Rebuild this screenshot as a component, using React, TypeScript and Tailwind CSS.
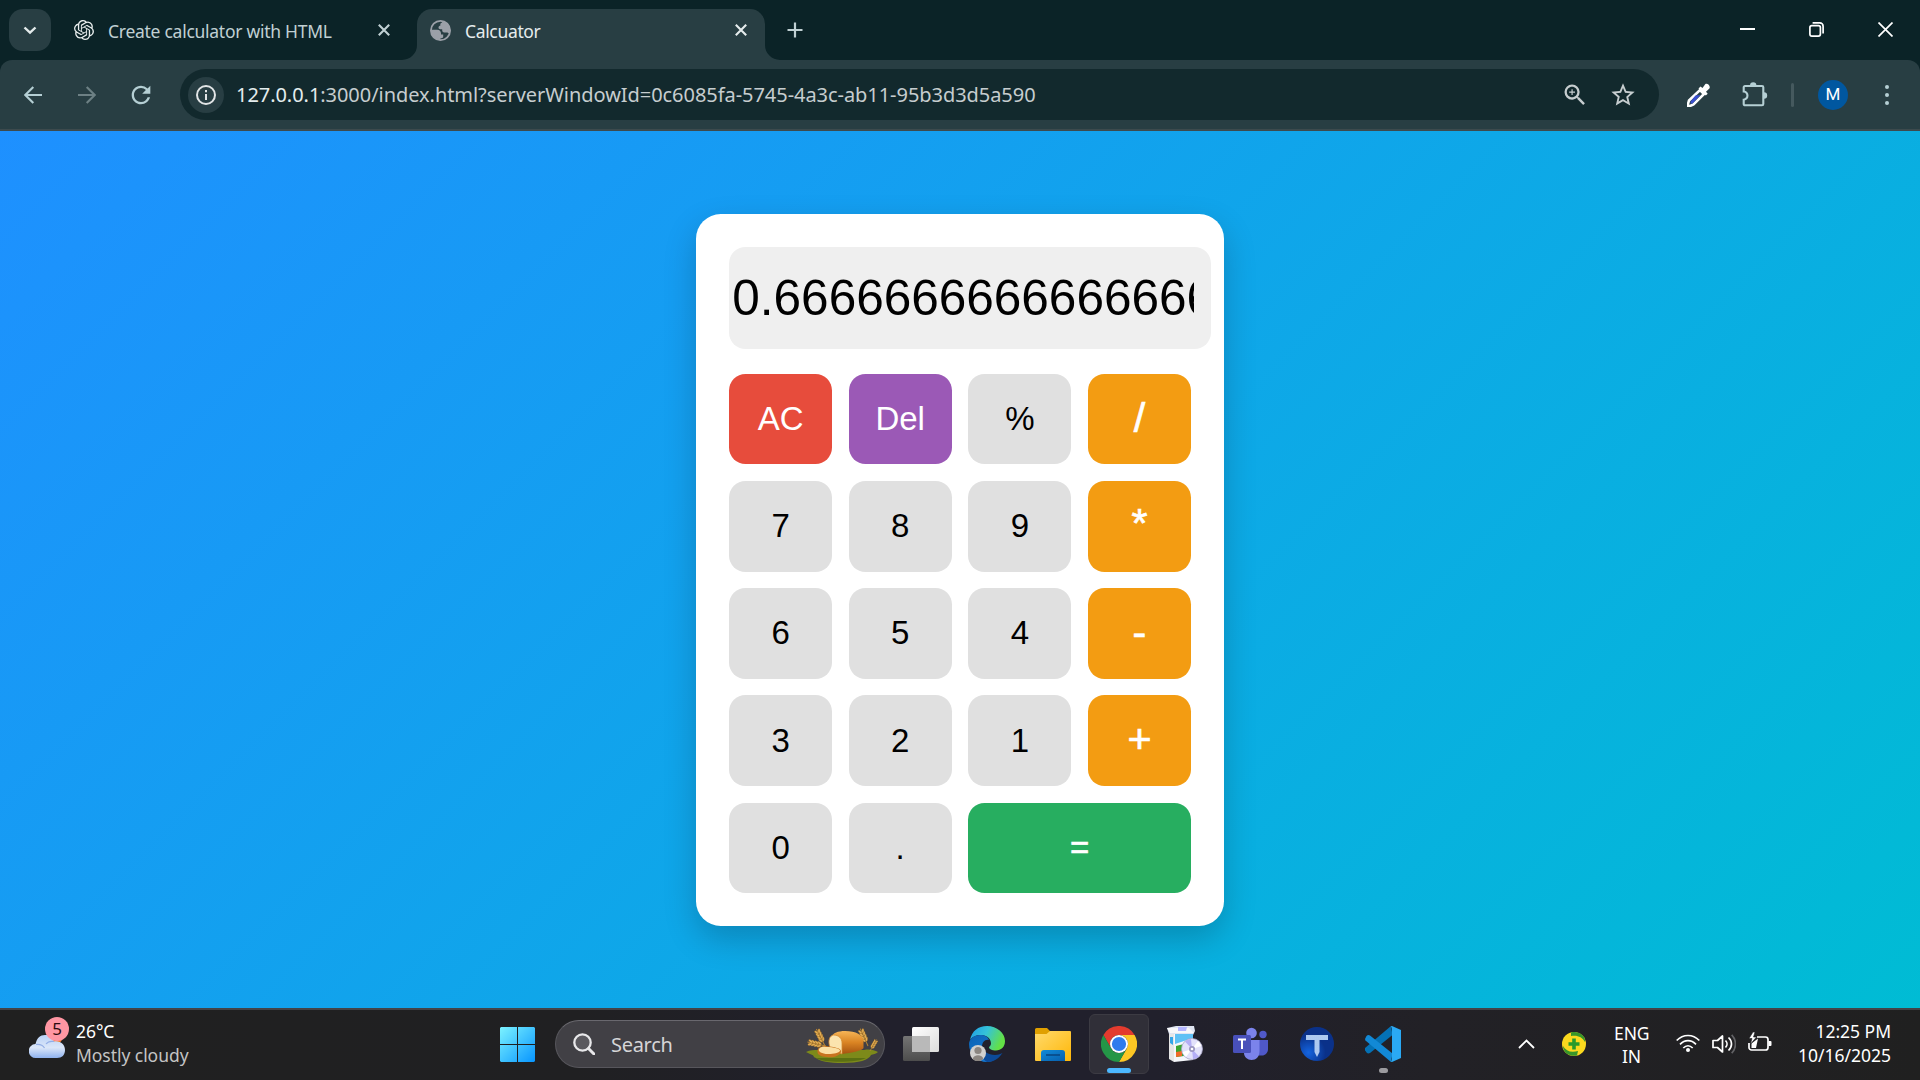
import type { ReactNode } from "react";
import { SiOpenai } from "react-icons/si";
import { MdOutlineZoomIn, MdStarBorder, MdRefresh } from "react-icons/md";

const ui = "font-['Noto_Sans','Open_Sans',sans-serif]";

function Close({ className }: { className: string }) {
  return (
    <svg className={className} width="12" height="12" viewBox="0 0 12 12" fill="none" stroke="currentColor" strokeWidth="2.1">
      <path d="M.8.8 11.2 11.2M11.2.8.8 11.2" />
    </svg>
  );
}

function Globe() {
  return (
    <svg className="mt-5 ml-[13px] h-[21px] w-[21px] shrink-0" viewBox="0 0 21 21">
      <circle cx="10.5" cy="10.5" r="9.6" fill="none" stroke="#9ba0a8" strokeWidth="1.8" />
      <path d="M11 .8C15.500.8 20.300 4.600 20.300 10.500c0 1.200-.2 2.200-.5 3.100-1-.1-1.800-.5-2.300-1.200h-3.300c-1.300 0-2-.8-2-1.900V9.200h-1.900c-1.100 0-1.800-.7-1.800-1.700 0-1.200.8-1.800 1.800-1.800V4.500c0-1.200.8-1.900 2-2.100Z" fill="#9ba0a8" />
      <path d="M1 9.800h6.200c2.300 0 3.800 1.500 3.800 3.600v1h2.200v2.200c0 1-.7 1.700-1.700 1.700h-1v2C5 20.200 1 15.500 1 9.800Z" fill="#9ba0a8" />
    </svg>
  );
}

function TabStrip() {
  return (
    <div className="flex h-[60px] bg-[#0b2327] text-[#c0d0d3]">
      <button className="mt-[9px] ml-[9px] flex h-[42px] w-[42px] items-center justify-center rounded-[14px] bg-[#283e43] text-[#e3eaeb]">
        <svg width="14" height="9" viewBox="0 0 14 9" fill="none" stroke="currentColor" strokeWidth="2.4"><path d="m1.500 1.500 5.500 5.200 5.500-5.200" /></svg>
      </button>
      <div className="flex w-[366px]">
        <SiOpenai className="mt-5 ml-[23px] shrink-0 text-[#e9eeee]" size={20} />
        <span className="mt-[18px] ml-[14px] w-[270px] text-[17.500px] leading-[26px] tracking-[-0.270px] whitespace-nowrap">Create calculator with HTML</span>
        <Close className="mt-6 shrink-0" />
      </div>
      <div className="relative mt-[9px] flex h-[51px] w-[348px] rounded-t-[15px] bg-[#283e43] text-[#e6eced]">
        <svg className="absolute bottom-0 -left-[15px]" width="15" height="15"><path d="M15 0v15H0A15 15 0 0 0 15 0Z" fill="#283e43" /></svg>
        <svg className="absolute -right-[15px] bottom-0" width="15" height="15"><path d="M0 0v15h15A15 15 0 0 1 0 0Z" fill="#283e43" /></svg>
        <div className="-mt-[9px] flex">
          <Globe />
          <span className="mt-[18px] ml-[14px] w-[270px] text-[17.500px] leading-[26px] tracking-[-0.340px]">Calcuator</span>
          <Close className="mt-6 shrink-0" />
        </div>
      </div>
      <svg className="mt-[22px] ml-[22px]" width="16" height="16" viewBox="0 0 16 16" stroke="currentColor" strokeWidth="2.200"><path d="M8 .5v15M.5 8h15" /></svg>
      <div className="mt-[22px] mr-[27px] ml-auto flex gap-[54px] text-white">
        <svg width="15" height="15" stroke="currentColor" strokeWidth="2"><path d="M0 7h15" /></svg>
        <svg width="15" height="15" fill="none" stroke="currentColor" strokeWidth="1.700"><rect x=".9" y="3.600" width="10.500" height="10.500" rx="2" /><path d="M3.600.9h7.200a3.300 3.300 0 0 1 3.300 3.300v7.300" /></svg>
        <svg width="15" height="15" stroke="currentColor" strokeWidth="1.700"><path d="m.5.500 14 14M14.500.5l-14 14" /></svg>
      </div>
    </div>
  );
}

function Toolbar() {
  return (
    <div className="bg-[#0b2327]">
      <div className="flex h-[71px] items-center rounded-t-[12px] border-b-2 border-[#3d4a4d] bg-[#283e43] text-[#b5cfd4]">
        <svg className="ml-6" width="18" height="18" fill="none" stroke="currentColor" strokeWidth="2.100"><path d="M18 9H1.500M9.300 1 1.300 9l8 8" /></svg>
        <svg className="ml-9 text-[#6d8084]" width="18" height="18" fill="none" stroke="currentColor" strokeWidth="2.100"><path d="M0 9h16.500M8.700 1l8 8-8 8" /></svg>
        <MdRefresh className="ml-[31px] shrink-0" size={28} />
        <div className="ml-[25px] flex h-[51px] w-[1479px] items-center rounded-full bg-[#12292d] text-[#c6cdcf]">
          <span className="ml-2 flex h-9 w-9 items-center justify-center rounded-full bg-[#283e43] text-[#e2e5e6]">
            <svg width="20" height="20" fill="none" stroke="currentColor" strokeWidth="2"><circle cx="10" cy="10" r="9" /><path d="M10 9v6M10 5v2.200" /></svg>
          </span>
          <span className="ml-3 w-[1311px] text-[20px] leading-[28px] tracking-[-0.050px] whitespace-nowrap">
            <span className="text-[#e4edee]">127.0.0.1</span>:3000/index.html?serverWindowId=0c6085fa-5745-4a3c-ab11-95b3d3d5a590
          </span>
          <MdOutlineZoomIn className="ml-[14px] shrink-0" size={28} />
          <MdStarBorder className="ml-5 shrink-0" size={28} />
        </div>
        <svg className="ml-[28px]" width="24" height="24" viewBox="0 0 24 24">
          <path d="m13 7 4 4L6.500 21.500 3 23H1v-2l1-3.500Z" fill="#283e43" stroke="#fff" strokeWidth="2.600" />
          <path d="m8.500 12.500 5-.5-8 8.500H3.600v-2Z" fill="#3a4fd0" />
          <path d="m11.500 5.500 2-2 2 1.500 2.700-3.700c2-1.800 5.800 2 4.200 4.200L19 8.700l1.700 2-1.900 1.900Z" fill="#fff" />
        </svg>
        <svg className="ml-[31px]" width="26" height="25" viewBox="0 0 26 25">
          <path d="M3 4h17a1.300 1.300 0 0 1 1.300 1.300V22a1.300 1.300 0 0 1-1.300 1.300H3A1.300 1.300 0 0 1 1.700 22v-4.300c5-.8 5-7.400 0-8.200V5.300A1.300 1.300 0 0 1 3 4Z" fill="none" stroke="currentColor" strokeWidth="2.100" />
          <path d="M8 3.500a3.200 3.200 0 0 1 6.400 0ZM22 10.300a3.200 3.200 0 0 1 0 6.400Z" fill="currentColor" />
        </svg>
        <div className="ml-[23px] h-6 w-[3px] rounded bg-[#45595e]" />
        <div className="ml-6 flex h-[30px] w-[30px] items-center justify-center rounded-full bg-[#0057a0] font-[Roboto,sans-serif] text-[17px] font-normal text-white">M</div>
        <div className="ml-[37px] flex flex-col gap-1">
          <i className="h-1 w-1 rounded-full bg-current" />
          <i className="h-1 w-1 rounded-full bg-current" />
          <i className="h-1 w-1 rounded-full bg-current" />
        </div>
      </div>
    </div>
  );
}

const grey = "pb-px bg-[#e0e0e0] text-[33px] text-black";
const orange = "bg-[#f39c12] text-[41.250px] text-white [-webkit-text-stroke:0.7px_white]";
const keys: [string, string][] = [
  ["AC", "pb-px bg-[#e74c3c] text-[33px] text-white"], ["Del", "pb-px bg-[#9b59b6] text-[33px] text-white"], ["%", grey], ["/", `${orange} pb-px`],
  ["7", grey], ["8", grey], ["9", grey], ["*", `${orange} pb-[5px]`],
  ["6", grey], ["5", grey], ["4", grey], ["-", `${orange} pb-px`],
  ["3", grey], ["2", grey], ["1", grey], ["+", `${orange} pb-[2px]`],
  ["0", grey], [".", grey], ["=", "col-span-2 pb-px bg-[#27ae60] text-[33px] text-white [-webkit-text-stroke:0.6px_white]"],
];

function Calculator() {
  return (
    <main className="flex h-[877px] justify-center bg-[linear-gradient(135deg,#1e90ff,#00bcd4)] font-['Liberation_Sans',Arial,sans-serif]">
      <div className="mt-[83px] h-[712px] w-[528px] rounded-[24.750px] bg-white p-[33px] shadow-[0_13px_33px_rgba(0,0,0,0.2)]">
        <div className="h-[102px] w-[482px] rounded-[16.500px] bg-[#efefef] pr-[17px] pl-[3.300px]">
          <div className="overflow-hidden text-[49.500px] leading-[102px] whitespace-nowrap text-black">0.6666666666666666</div>
        </div>
        <div className="mt-[24.600px] grid grid-cols-4 gap-[16.500px]">
          {keys.map(([label, tone]) => (
            <button key={label} className={`h-[90.750px] rounded-[16.500px] leading-none ${tone}`}>{label}</button>
          ))}
        </div>
      </div>
    </main>
  );
}

function Weather() {
  return (
    <div className="ml-[29px] flex w-[471px]">
      <div className="relative mt-[26px] h-[26px] w-9">
        <svg width="36" height="26" viewBox="0 0 36 26">
          <defs><linearGradient id="cl" x2="0" y2="1"><stop stopColor="#b9d2f7" /><stop offset=".55" stopColor="#dbe6f8" /><stop offset="1" stopColor="#8fb2ee" /></linearGradient></defs>
          <circle cx="26" cy="2" r="8" fill="#f47b20" />
          <path d="M7 24a7 7 0 0 1-.5-14C8 4 11 1 16 1c4.500 0 7.500 2.500 9 6.500C31.500 6.500 36 10.500 36 16c0 5-3 8-8 8Z" fill="url(#cl)" />
          <path d="M7 10.500c4-.5 7 1 8.500 3.500M17 10c2-2.500 5-3 8-2.500" stroke="#93aee6" strokeWidth="1.200" fill="none" />
        </svg>
        <span className="absolute -top-[17px] left-4 h-6 w-6 rounded-full bg-[#ff96a3] text-center text-[17px] leading-6 text-[#2b0c10]">5</span>
      </div>
      <div className="mt-[11px] ml-[11px] text-[17.500px] leading-6 tracking-[-0.050px] text-[#c4c4c4]">
        <div className="text-white">26°C</div>
        <div>Mostly cloudy</div>
      </div>
    </div>
  );
}

function Wheat({ transform }: { transform: string }) {
  return (
    <g transform={transform}>
      <path d="M0 0V-19" stroke="#b98532" strokeWidth="1" />
      {[-7, -10, -13, -16].map((y) => (
        <g key={y} fill="#e5b055" stroke="#93601d" strokeWidth=".35">
          <ellipse cx="-1.500" cy={y} rx="1.100" ry="2.300" transform={`rotate(-25 -1.500 ${y})`} />
          <ellipse cx="1.500" cy={y} rx="1.100" ry="2.300" transform={`rotate(25 1.500 ${y})`} />
        </g>
      ))}
    </g>
  );
}

function Bread() {
  return (
    <svg className="mt-px ml-[134px]" width="72" height="36" viewBox="0 0 72 36">
      <defs>
        <linearGradient id="crust" x2="0" y2="1"><stop stopColor="#f6b556" /><stop offset=".5" stopColor="#da8423" /><stop offset="1" stopColor="#a65310" /></linearGradient>
      </defs>
      <path d="M0 25c4-2 8-2 12-2h46c6-1 10 0 14 2-2 2-5 2-7 3-2 5-12 8-28 8-14 0-24-2-27-5C6 30 10 29 4 27Z" fill="#7d8a1a" />
      <path d="M10 31h50c-6 4-40 6-50 0Z" fill="#5b7012" />
      <Wheat transform="translate(19 19) rotate(-27)" />
      <Wheat transform="translate(20 19) rotate(-78)" />
      <Wheat transform="translate(62 19) rotate(-24)" />
      <Wheat transform="translate(64 24) rotate(30) scale(.7)" />
      <path d="M25 10c2-4 7-6 14-6 11 0 18 4 18.500 10v7c0 2-12 5-22 6Z" fill="url(#crust)" />
      <path d="M23.500 19c-1.500-6 0-10 4-11 5 0 8.500 3 8.500 8v11l-11-4Z" fill="#fbe4ae" stroke="#d68a2e" strokeWidth=".8" />
      <path d="M12 27c-2-6 2-8 8-8 8 1 16 2 15 6-1 4-8 6-14 5-4 0-7-1-9-3Z" fill="#c8741f" />
      <path d="M13 24c-1-3 3-5 7-4 8 0 15 2 14 4-2 3-17 5-21 0Z" fill="#fbe0a3" />
    </svg>
  );
}

function App36({ children, className = "" }: { children: ReactNode; className?: string }) {
  return (
    <svg className={`mt-[18px] shrink-0 ${className}`} width="36" height="36" viewBox="0 0 36 36">
      {children}
    </svg>
  );
}

function Apps() {
  return (
    <div className="flex">
      <svg className="mt-[19px]" width="35" height="35" viewBox="0 0 35 35">
        <defs><linearGradient id="win" gradientUnits="userSpaceOnUse" x2="35" y2="35"><stop stopColor="#7cf3ff" /><stop offset="1" stopColor="#0795ff" /></linearGradient></defs>
        <path d="M1 0h16v17H0V1ZM18 0h16l1 1v16H18ZM0 18h17v17H1l-1-1ZM18 18h17v16l-1 1H18Z" fill="url(#win)" />
      </svg>
      <div className="mt-3 ml-5 flex h-12 w-[330px] items-center rounded-full border border-[#57565c] border-t-[#69686e] bg-[#414045] text-[#d5d5d7]">
        <svg className="ml-[17px]" width="22" height="22" fill="none" stroke="#e8e8ea" strokeWidth="2.300"><circle cx="9.500" cy="9.500" r="8.200" fill="#5a595e" /><path d="m15.500 15.500 5.500 5.500" strokeWidth="3" strokeLinecap="round" /></svg>
        <span className="mt-[2px] ml-4 w-[61px] text-[20px] tracking-[-0.300px]">Search</span>
        <Bread />
      </div>
      <App36 className="ml-[18px]">
        <defs>
          <linearGradient id="tv" x2="1" y2="1"><stop stopColor="#fff" /><stop offset="1" stopColor="#dcdcdc" /></linearGradient>
          <linearGradient id="tv2" x2="0" y2="1"><stop stopColor="#747474" /><stop offset="1" stopColor="#4d4d4d" /></linearGradient>
        </defs>
        <rect y="10" width="27" height="25" rx="1.500" fill="url(#tv2)" />
        <rect x="9" y="1" width="27" height="25" rx="1.500" fill="url(#tv)" />
        <path d="M9 10h18v16H9Z" fill="#b9b9b9" />
      </App36>
      <App36 className="ml-[30px]">
        <defs>
          <linearGradient id="ed" x2="1" y2=".35"><stop stopColor="#1d9be8" /><stop offset=".5" stopColor="#35c3d8" /><stop offset="1" stopColor="#63e046" /></linearGradient>
          <linearGradient id="ed2" x2=".7" y2="1"><stop stopColor="#0c62b3" /><stop offset="1" stopColor="#1479d4" /></linearGradient>
        </defs>
        <path d="M1 14C3 5 9 0 18 0c10 0 18 7 18 15 0 6-4 9.500-9 9.500-4 0-7-1.500-7-3 0-1 2-1.500 2-4C22 13 18 9 12 9 7 9 3 11 1 14Z" fill="url(#ed)" />
        <path d="M0 18c0-5 5-9 11-9 5 0 8 2 9 5-4-1-7 2-7 7 0 7 6 12 13 12-2 2-5 3-8 3C8 36 0 28 0 18Z" fill="url(#ed2)" />
        <path d="M13 20c1 5 6 9 13 9 3 0 5-1 7.500-2-4 6-9 9-15.500 9-4-2-7-9-5-16Z" fill="#0c4a99" />
        <circle cx="9" cy="27" r="8" fill="#d2d0ce" />
        <circle cx="9" cy="24.500" r="3.600" fill="#8b8580" />
        <path d="M3.800 33c.5-5 10-5 10.400 0-3 2.700-7.400 2.700-10.400 0Z" fill="#8b8580" />
      </App36>
      <App36 className="ml-[30px]">
        <defs>
          <linearGradient id="fo" x2="1" y2="1"><stop stopColor="#ffda6c" /><stop offset="1" stopColor="#ffb708" /></linearGradient>
          <linearGradient id="fb" x2="1" y2="1"><stop stopColor="#118bd8" /><stop offset="1" stopColor="#075fae" /></linearGradient>
        </defs>
        <path d="M0 3.500A1.500 1.500 0 0 1 1.500 2H12l3 3v4H0Z" fill="#e0a000" />
        <path d="M0 8h11.500L15 5h20a1 1 0 0 1 1 1v28a1 1 0 0 1-1 1H1a1 1 0 0 1-1-1Z" fill="url(#fo)" />
        <path d="M6 35v-8a3 3 0 0 1 3-3h18a3 3 0 0 1 3 3v8Z" fill="url(#fb)" />
        <path d="M11 29h14" stroke="#08447f" strokeWidth="1.500" />
      </App36>
      <div className="mt-[6px] ml-[18px] flex h-[60px] w-[60px] flex-col items-center rounded-[6px] border border-[#3c3b43] bg-[#302f38]">
        <svg className="mt-[11px] shrink-0" width="36" height="36" viewBox="0 0 36 36">
          <path d="M2.400 9a18 18 0 0 1 31.200 0H18a9 9 0 0 0-7.800 13.500Z" fill="#e33b2e" />
          <path d="M33.600 9A18 18 0 0 1 18 36l7.800-13.500A9 9 0 0 0 18 9Z" fill="#fdc724" />
          <path d="M18 36A18 18 0 0 1 2.400 9l7.800 13.500A9 9 0 0 0 25.800 22.500Z" fill="#249647" />
          <circle cx="18" cy="18" r="9" fill="#fff" />
          <circle cx="18" cy="18" r="7.100" fill="#2f7bed" />
        </svg>
        <div className="mt-[6px] h-[5px] w-6 shrink-0 rounded-full bg-[#4cb8ff]" />
      </div>
      <App36 className="ml-[18px]">
        <path d="m0 2 9-2h18l1 5-3 6H3Z" fill="#dfe5f2" />
        <path d="M0 2h22l5 5H3Z" fill="#f8f8fa" />
        <path d="M11 1h9l-1 4h-8Z" fill="#b5b6ff" />
        <path d="M2 8h5v28l-5-3Z" fill="#e6e6e6" />
        <path d="M3 11h3v8l-3-2Z" fill="#35a5e8" />
        <path d="M7 8h19v26L7 36Z" fill="#f5f7fb" />
        <path d="M8 8h18v4L8 18Z" fill="#5fc1f5" />
        <path d="m9 20 8-2v12l-8 1Z" fill="#3aa431" />
        <path d="m9 26 6-1v5l-6 1Z" fill="#f06a2a" />
        <circle cx="25" cy="23" r="10.500" fill="#e3e2fa" stroke="#a6a4c4" strokeWidth=".8" />
        <path d="m25 23-7-7.500a10 10 0 0 1 6-2.500ZM25 23l7 7.500a10 10 0 0 1-6 2.500Z" fill="#b4aef5" />
        <path d="m25 23 6-8a10 10 0 0 1 3.500 5ZM25 23l-6 8a10 10 0 0 1-3.500-5Z" fill="#fff" />
        <circle cx="25" cy="23" r="3" fill="#9b96c0" />
        <circle cx="25" cy="23" r="1.300" fill="#fff" />
      </App36>
      <App36 className="ml-[30px]">
        <circle cx="30" cy="8.500" r="3.700" fill="#5059c9" />
        <path d="M24 14h11v9c0 4-3 6.500-6 6.500h-5Z" fill="#4f58c8" />
        <circle cx="18.500" cy="7" r="5.300" fill="#7b83eb" />
        <path d="M11 14h15.500v11c0 6-3.500 9-8 9-4 0-7.500-3-7.500-7Z" fill="#7b83eb" />
        <rect y="9" width="18" height="18" rx="1.500" fill="#4850ba" />
        <path d="M5 13.500h8M9 13.500v9.500" stroke="#fff" strokeWidth="2" />
      </App36>
      <App36 className="ml-[30px]">
        <defs>
          <radialGradient id="tb" cx=".25" cy=".75"><stop stopColor="#1464df" /><stop offset="1" stopColor="#0a3189" /></radialGradient>
          <pattern id="dots" width="2" height="2" patternUnits="userSpaceOnUse"><rect width="2" height="2" fill="#4b83d4" /><circle cx="1" cy="1" r=".9" fill="#dceaff" /></pattern>
        </defs>
        <circle cx="18" cy="18" r="17" fill="url(#tb)" />
        <path d="M7 9h22v5h-8.500v12L18 31l-2.500-5V14H7Z" fill="url(#dots)" />
      </App36>
      <div className="ml-[30px] flex w-9 flex-col items-center">
        <App36>
          <path d="m0 22 26-22 1.500 9L5 27q-2 1-3.500-.5L.5 25q-1.500-1.500-.5-3Z" fill="#0471b5" />
          <path d="m0 13 1.500-3Q3 8.500 5 9.500l22.500 18L26 36 .5 14.500Z" fill="#1289d6" />
          <path d="M26 0h1l9 4v28l-9 4h-1l1-3V3Z" fill="#2aa9f4" />
        </App36>
        <div className="mt-[6px] h-[5px] w-[9px] rounded-full bg-[#9c9b9f]" />
      </div>
    </div>
  );
}

function Tray() {
  return (
    <div className="mr-[29px] ml-auto flex text-[17.500px] text-white">
      <svg className="mt-[31px]" width="17" height="10" fill="none" stroke="currentColor" strokeWidth="1.800"><path d="m1 9 7.500-7.500L16 9" /></svg>
      <svg className="mt-6 ml-[27px]" width="24" height="24" viewBox="0 0 24 24">
        <circle cx="12" cy="12" r="12" fill="#fbd91e" />
        <path d="M9 .5C17-1.500 24 4 23 10 20 5 16 3 9 4ZM1 14c3 5 8 7 15 5l-1 4.500C8 25 1 21 1 14Z" fill="#37962a" />
        <path d="M12 6.500v11M6.500 12h11" stroke="#299a2b" strokeWidth="3.600" />
      </svg>
      <div className="mt-[14px] ml-7 w-[35px] text-center leading-[23px] tracking-[-0.100px]"><div>ENG</div><div>IN</div></div>
      <svg className="mt-[26px] ml-[27px]" width="24" height="19" fill="none" stroke="currentColor" strokeWidth="1.700">
        <path d="M.7 6.500c6.500-6.700 16.100-6.700 22.600 0M4 10.300c4.700-4.800 11.300-4.800 16 0M7.300 14c2.900-3 6.500-3 9.400 0" /><circle cx="12" cy="16" r="2" fill="currentColor" stroke="none" />
      </svg>
      <svg className="mt-[26px] ml-3" width="24" height="20" fill="none" stroke="currentColor" strokeWidth="1.700">
        <path d="M1 6.500h4.500l5-4.500v16l-5-4.500H1Z" strokeLinejoin="round" /><path d="M13.500 6.500c2 2 2 5 0 7M16.500 3.500c4 3.700 4 9.300 0 13" /><path d="M19.700.8c5 5.400 5 13 0 18.400" stroke="#626265" />
      </svg>
      <svg className="mt-6 ml-3" width="25" height="20" fill="none" stroke="currentColor" strokeWidth="1.700">
        <path d="M9 5h8.500a2.500 2.500 0 0 1 2.500 2.500v8a2.500 2.500 0 0 1-2.500 2.500H3.500A2.500 2.500 0 0 1 1 15.500V11" /><path d="M20.500 9h2a1 1 0 0 1 1 1v3a1 1 0 0 1-1 1h-2Z" fill="currentColor" stroke="none" /><path d="M3.500 16v-4.500L10 6.500l-2 9.500Z" fill="currentColor" stroke="none" /><path d="M5 0 1 6.500h3L2.500 12 8.500 5H5.500L7 0Z" fill="currentColor" stroke="#202023" strokeWidth=".6" />
      </svg>
      <div className="mt-[11px] w-[118px] text-right leading-6 tracking-[-0.020px]"><div>12:25 PM</div><div>10/16/2025</div></div>
    </div>
  );
}

export default function App() {
  return (
    <div className={`h-[1080px] w-[1920px] overflow-hidden ${ui}`}>
      <TabStrip />
      <Toolbar />
      <Calculator />
      <footer className="flex h-[72px] border-t-2 border-[#434347] bg-[linear-gradient(90deg,#202020_0%,#202022_30%,#21202c_45%,#21202c_60%,#222126_75%,#202020_100%)] [&>div]:-mt-[2px]">
        <Weather />
        <Apps />
        <Tray />
      </footer>
    </div>
  );
}
